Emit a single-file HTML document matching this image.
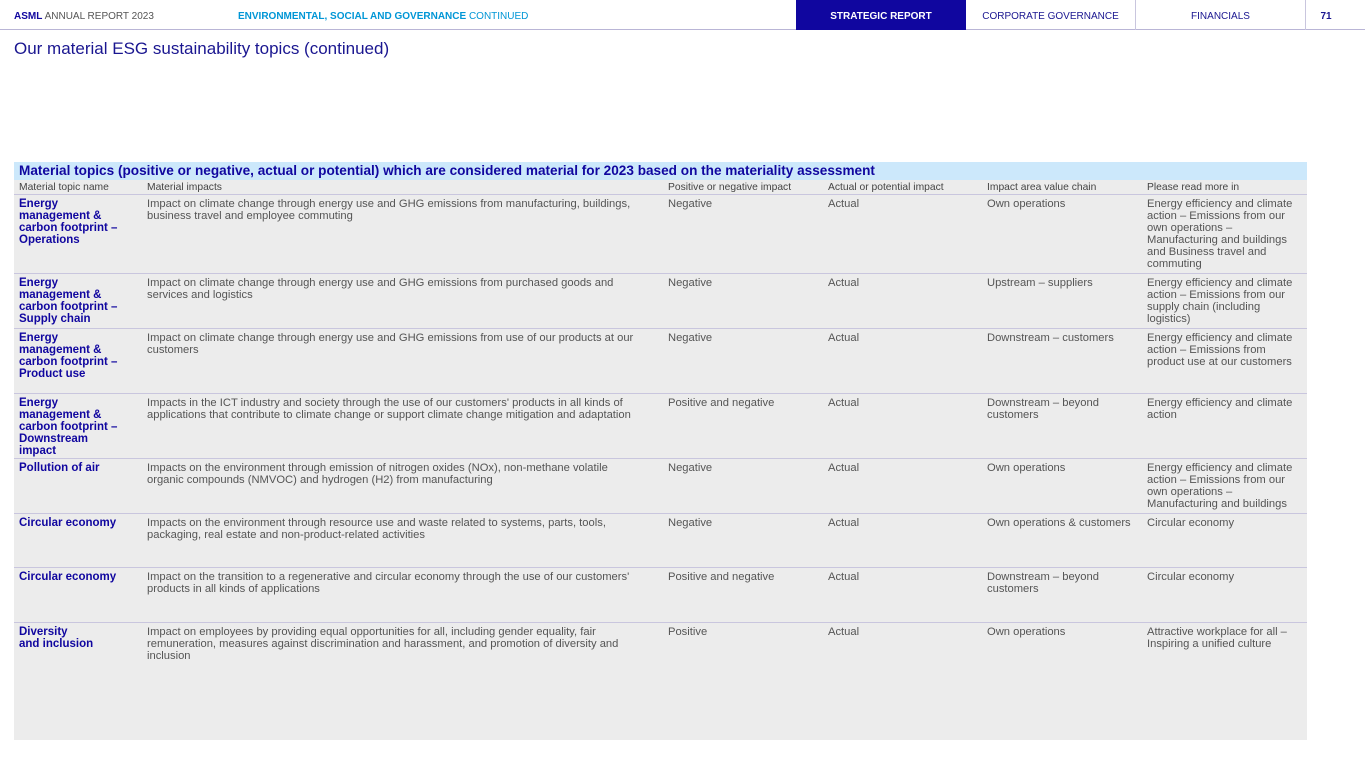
<!DOCTYPE html>
<html><head><meta charset="utf-8"><style>
*{margin:0;padding:0;box-sizing:border-box}
body{width:1365px;height:769px;background:#fff;font-family:"Liberation Sans",Arial,sans-serif;position:relative;overflow:hidden;color:#555}
.top{position:absolute;top:0;left:0;width:1365px;height:30px;border-bottom:1px solid #b9b5d6}
.t{position:absolute;top:11px;font-size:10px;white-space:nowrap}
.nav{position:absolute;top:0;height:30px;font-size:10px;text-align:center;line-height:34px;color:#1a1690}
h1{position:absolute;left:14px;top:39px;font-size:17px;font-weight:normal;color:#1a1690}
.tbl{position:absolute;left:14px;top:162px;width:1293px;background:#ececec}
.cap{height:18px;background:#cce8fb;color:#10069f;font-weight:bold;font-size:13.6px;line-height:18px;padding-left:5px;white-space:nowrap}
.row{position:relative;border-bottom:1px solid #c9c6de;font-size:11.2px;line-height:12px}
.row div{position:absolute;top:3px}
.hd{font-size:10.3px;height:15px}
.hd div{top:2px;color:#444}
.c1{left:5px;width:108px;color:#10069f;font-weight:bold;font-size:11.5px}
.c2{left:133px;width:508px}
.c3{left:654px;width:155px}
.c4{left:814px;width:155px}
.c5{left:973px;width:150px}
.c6{left:1133px;width:155px}
</style></head><body>
<div class="top">
<div class="t" style="left:14px;color:#333"><b style="color:#10069f">ASML</b> <span style="color:#555">ANNUAL REPORT 2023</span></div>
<div class="t" style="left:238px;color:#0096d6"><b>ENVIRONMENTAL, SOCIAL AND GOVERNANCE</b> CONTINUED</div>
<div class="nav" style="left:796px;width:170px;background:#10069f;color:#fff;font-weight:bold;line-height:34px">STRATEGIC REPORT</div>
<div class="nav" style="left:966px;width:170px;border-right:1px solid #c9c6de">CORPORATE GOVERNANCE</div>
<div class="nav" style="left:1136px;width:170px;border-right:1px solid #c9c6de">FINANCIALS</div>
<div class="nav" style="left:1306px;width:40px;font-weight:bold">71</div>
</div>
<h1>Our material ESG sustainability topics (continued)</h1>
<div class="tbl">
<div class="cap">Material topics (positive or negative, actual or potential) which are considered material for 2023 based on the materiality assessment</div>
<div class="row hd"><div class="c1" style="color:#444;font-weight:normal;font-size:10.3px;width:125px">Material topic name</div><div class="c2">Material impacts</div><div class="c3">Positive or negative impact</div><div class="c4">Actual or potential impact</div><div class="c5">Impact area value chain</div><div class="c6">Please read more in</div></div>
<div class="row" style="height:79px"><div class="c1">Energy management &amp; carbon footprint – Operations</div><div class="c2">Impact on climate change through energy use and GHG emissions from manufacturing, buildings, business travel and employee commuting</div><div class="c3">Negative</div><div class="c4">Actual</div><div class="c5">Own operations</div><div class="c6">Energy efficiency and climate action – Emissions from our own operations – Manufacturing and buildings and Business travel and commuting</div></div>
<div class="row" style="height:55px"><div class="c1">Energy management &amp; carbon footprint – Supply chain</div><div class="c2">Impact on climate change through energy use and GHG emissions from purchased goods and<br>services and logistics</div><div class="c3">Negative</div><div class="c4">Actual</div><div class="c5">Upstream – suppliers</div><div class="c6">Energy efficiency and climate action – Emissions from our supply chain (including logistics)</div></div>
<div class="row" style="height:65px"><div class="c1">Energy management &amp; carbon footprint – Product use</div><div class="c2">Impact on climate change through energy use and GHG emissions from use of our products at our customers</div><div class="c3">Negative</div><div class="c4">Actual</div><div class="c5">Downstream – customers</div><div class="c6">Energy efficiency and climate action – Emissions from product use at our customers</div></div>
<div class="row" style="height:65px"><div class="c1">Energy management &amp; carbon footprint – Downstream impact</div><div class="c2">Impacts in the ICT industry and society through the use of our customers' products in all kinds of applications that contribute to climate change or support climate change mitigation and adaptation</div><div class="c3">Positive and negative</div><div class="c4">Actual</div><div class="c5">Downstream – beyond customers</div><div class="c6">Energy efficiency and climate action</div></div>
<div class="row" style="height:55px"><div class="c1">Pollution of air</div><div class="c2">Impacts on the environment through emission of nitrogen oxides (NOx), non-methane volatile<br>organic compounds (NMVOC) and hydrogen (H2) from manufacturing</div><div class="c3">Negative</div><div class="c4">Actual</div><div class="c5">Own operations</div><div class="c6">Energy efficiency and climate action – Emissions from our own operations – Manufacturing and buildings</div></div>
<div class="row" style="height:54px"><div class="c1">Circular economy</div><div class="c2">Impacts on the environment through resource use and waste related to systems, parts, tools,<br>packaging, real estate and non-product-related activities</div><div class="c3">Negative</div><div class="c4">Actual</div><div class="c5">Own operations &amp; customers</div><div class="c6">Circular economy</div></div>
<div class="row" style="height:55px"><div class="c1">Circular economy</div><div class="c2">Impact on the transition to a regenerative and circular economy through the use of our customers'<br>products in all kinds of applications</div><div class="c3">Positive and negative</div><div class="c4">Actual</div><div class="c5">Downstream – beyond customers</div><div class="c6">Circular economy</div></div>
<div class="row" style="height:117px;border-bottom:none"><div class="c1">Diversity<br>and inclusion</div><div class="c2">Impact on employees by providing equal opportunities for all, including gender equality, fair<br>remuneration, measures against discrimination and harassment, and promotion of diversity and<br>inclusion</div><div class="c3">Positive</div><div class="c4">Actual</div><div class="c5">Own operations</div><div class="c6">Attractive workplace for all – Inspiring a unified culture</div></div>
</div>
</body></html>
